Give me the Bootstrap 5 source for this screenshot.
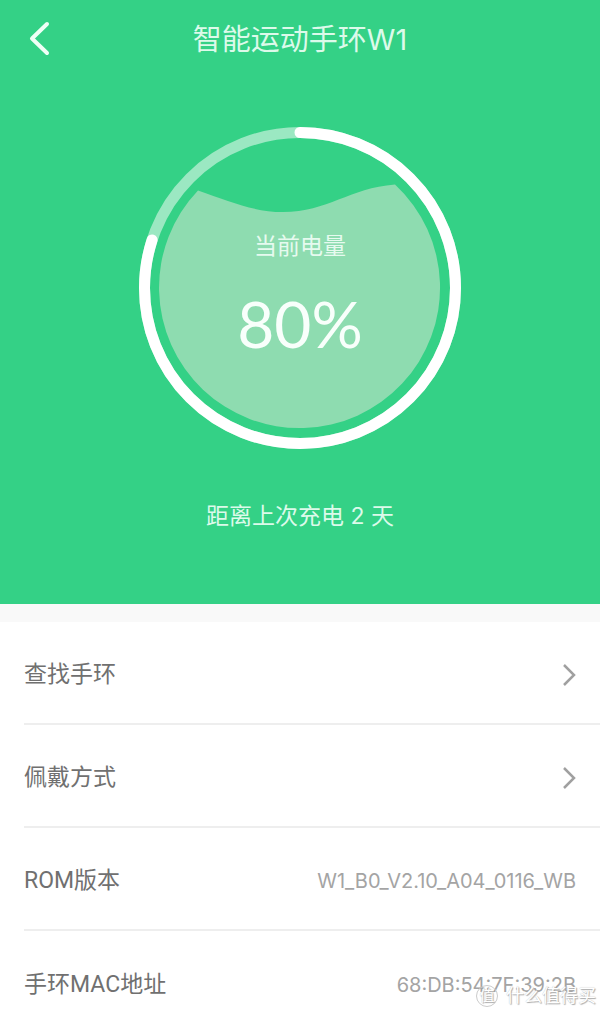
<!DOCTYPE html>
<html lang="zh-CN">
<head>
<meta charset="utf-8">
<meta name="viewport" content="width=device-width, initial-scale=1">
<title>智能运动手环W1</title>
<link href="https://cdn.jsdelivr.net/npm/bootstrap@5.3.0/dist/css/bootstrap.min.css" rel="stylesheet">
<style>
  body { font-family: Inter, "Noto Sans CJK SC", sans-serif; font-weight: 400; background: #fff; color: #666; }
  .hero { background: #34d186; color: #dcfaea; height: 604px; }
  .topbar { display: grid; grid-template-columns: 80px 1fr 80px; height: 80px; }
  .topbar h1 { font-size: 29px; font-weight: 400; line-height: 40px; }
  .back, .back:hover { color: #effff6; padding-left: 28px; }
  .gauge { display: grid; width: 324px; margin-top: 46px; }
  .gauge > * { grid-area: 1 / 1; }
  .gauge-label { font-size: 23px; line-height: 32px; margin-top: 104px; color: #e6faef; }
  .gauge-value { font-family: Lato, sans-serif; font-weight: 400; font-size: 64px; line-height: 72px; margin-top: 26px; color: #f8fffb; }
  .since { font-size: 23px; line-height: 32px; margin-top: 50px; }
  .spacer { height: 18px; background: #f9f9f9; }
  .rows { padding-left: 24px; }
  .rows .list-group-item { height: 103px; padding: 4px 24px 0 0; border-color: #eee; border-width: 0 0 2px; color: #707070; font-size: 23px; background: transparent; }
  .rows .list-group-item:last-child { height: 82px; padding-top: 36px; border: 0; align-items: flex-start !important; }
  .rows dt, .rows dd { margin: 0; font-weight: 400; line-height: 36px; }
  .rows dt { font-family: Roboto, "Noto Sans CJK SC", sans-serif; }
  .rows dd { font-size: 20px; color: #a4a4a4; }
  .stamp { position: absolute; right: 4px; bottom: 4px; font-size: 18px; line-height: 26px; color: #fff; text-shadow: 1px 1px 1px #aaa, 0 0 1px #bbb; }
  .stamp-seal { width: 22px; height: 22px; border: 1px solid #ccc; font-size: 15px; line-height: 20px; text-align: center; }
</style>
</head>
<body>
<main class="position-relative overflow-hidden">
  <section class="hero">
    <header class="topbar align-items-center">
      <button class="btn back text-start border-0 py-0 pe-0" type="button" aria-label="返回">
        <svg class="d-block" width="24" height="38" viewBox="0 0 24 38" fill="none" stroke="currentColor" stroke-width="4" stroke-linecap="round" stroke-linejoin="round"><path d="M19 3 4 17.500 19 32"/></svg>
      </button>
      <h1 class="text-center m-0">智能运动手环W1</h1>
    </header>
    <div class="gauge mx-auto">
      <svg class="w-100" viewBox="0 0 324 324" fill="none" aria-hidden="true">
        <circle cx="162" cy="162" r="155.500" stroke="#9be8c2" stroke-width="11"/>
        <path d="M60 64.500C91 75 115 86 145 86C190 86 211 62 257 58.500A140.500 140.500 0 1 1 60 64.500Z" fill="#8edcb0"/>
        <circle cx="162" cy="162" r="155.500" stroke="#fff" stroke-width="11" stroke-linecap="round" pathLength="100" stroke-dasharray="80 100" transform="rotate(-90 162 162)"/>
      </svg>
      <div class="text-center">
        <div class="gauge-label">当前电量</div>
        <div class="gauge-value">80%</div>
      </div>
    </div>
    <p class="since text-center mb-0">距离上次充电 2 天</p>
  </section>
  <div class="spacer"></div>
  <div class="rows list-group list-group-flush">
    <a href="#find" class="list-group-item d-flex align-items-center justify-content-between">查找手环
      <svg width="14" height="24" viewBox="0 0 14 24" fill="none" stroke="#a0a0a0" stroke-width="2.500"><path d="M2 2 12 12 2 22"/></svg>
    </a>
    <a href="#wear" class="list-group-item d-flex align-items-center justify-content-between">佩戴方式
      <svg width="14" height="24" viewBox="0 0 14 24" fill="none" stroke="#a0a0a0" stroke-width="2.500"><path d="M2 2 12 12 2 22"/></svg>
    </a>
    <dl class="list-group-item d-flex align-items-center justify-content-between mb-0"><dt>ROM版本</dt><dd>W1_B0_V2.10_A04_0116_WB</dd></dl>
    <dl class="list-group-item d-flex align-items-center justify-content-between mb-0"><dt>手环MAC地址</dt><dd>68:DB:54:7F:39:2B</dd></dl>
  </div>
  <div class="stamp d-flex align-items-center gap-2"><span class="stamp-seal rounded-circle">值</span><span>什么值得买</span></div>
</main>
<script src="https://cdn.jsdelivr.net/npm/bootstrap@5.3.0/dist/js/bootstrap.bundle.min.js"></script>
</body>
</html>
